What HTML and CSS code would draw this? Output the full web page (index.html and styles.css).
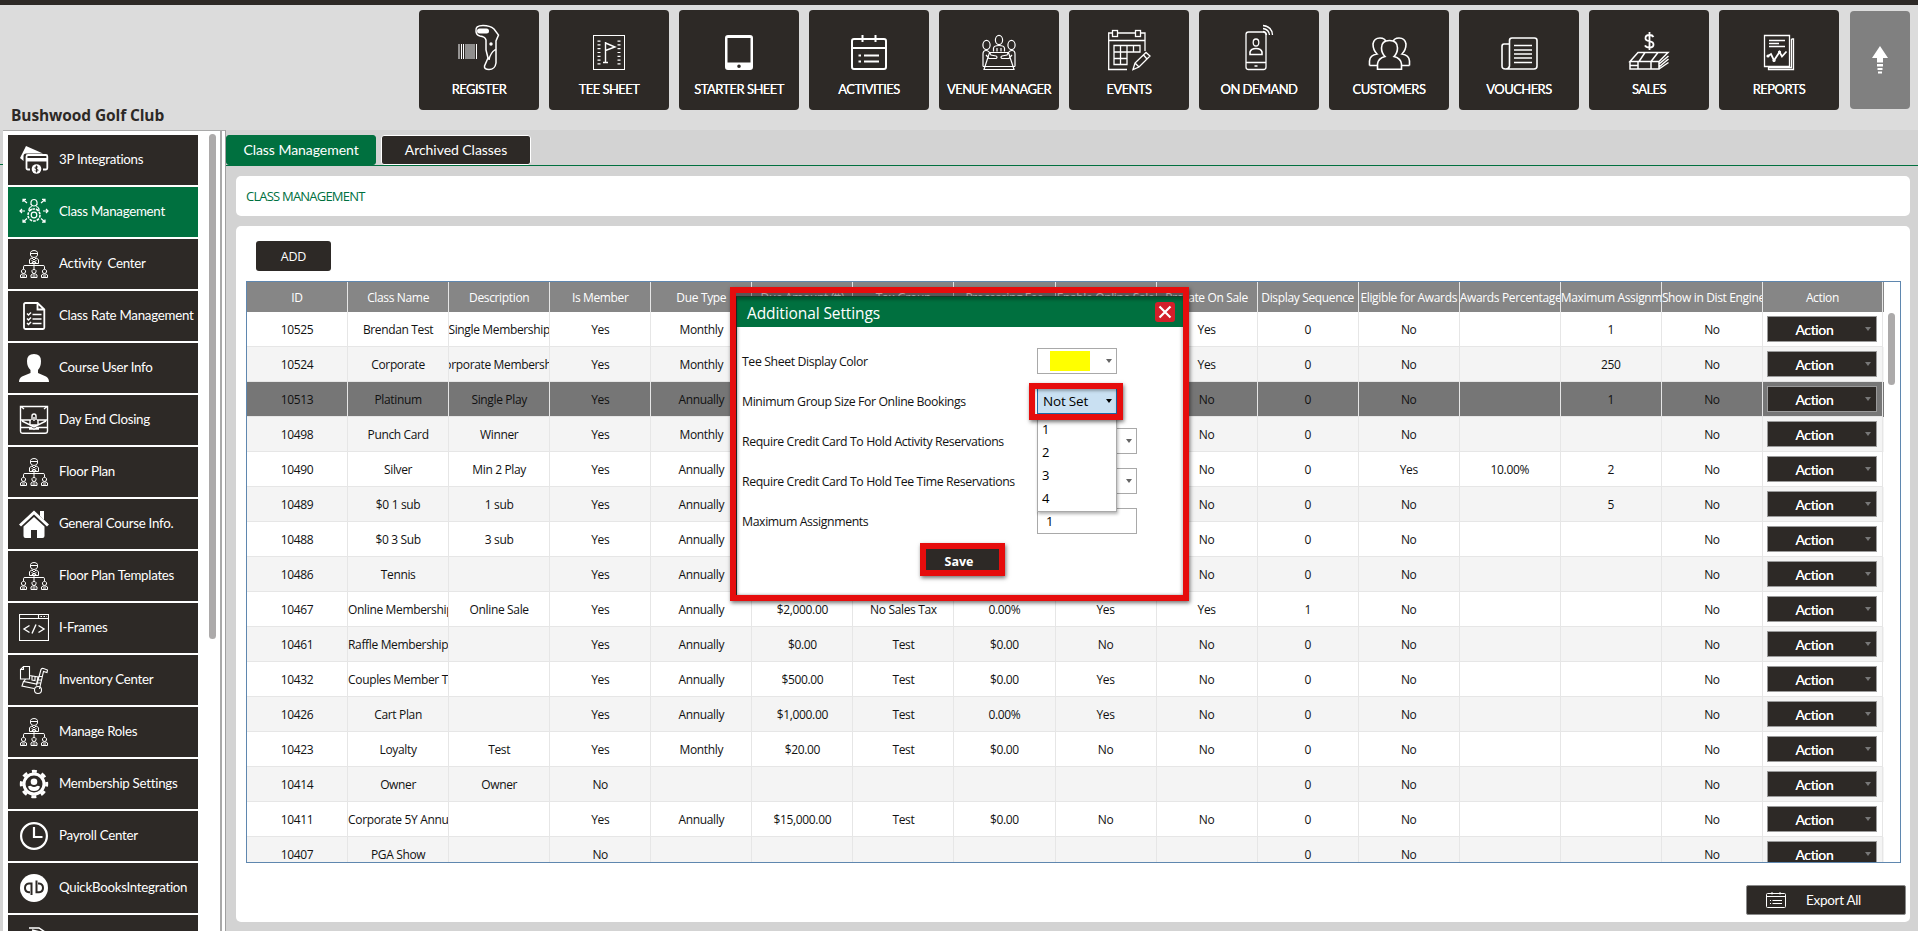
FILE: index.html
```
<!DOCTYPE html>
<html lang="en">
<head>
<meta charset="utf-8">
<title>Class Management</title>
<link rel="stylesheet" href="styles.css">
</head>
<body>
<svg class="defs" width="0" height="0">
  <symbol id="org" viewBox="0 0 30 30">
    <g fill="none" stroke="#fff" stroke-width="1">
      <path d="M11.5 6V3.5Q12 1.5 15 1.5T18.500 3.500V6Q18 8.500 15 8.500T11.500 6ZM11.500 4.500H18.500M10.500 14.500V11Q11 9.500 13 9L15 11L17 9Q19 9.500 19.500 11V14.500ZM12.500 11.500L17.500 14M17.500 11.500L12.500 14"/>
      <path d="M15 14.500V20M4.500 20V17.500Q4.500 16.500 6 16.500H24Q25.500 16.500 25.500 17.500V20"/>
      <g id="mini"><path d="M2.500 23V21.500Q3 20.500 4.500 20.500T6.500 21.500V23Q6 24.500 4.500 24.500T2.500 23ZM1.500 28.500V26L3 25H6L7.500 26V28.500ZM3 27H6"/></g>
      <use href="#mini" x="10.500"/><use href="#mini" x="21"/>
    </g>
  </symbol>
</svg>
<div class="topbar"></div>
<header class="header">
  <h1 class="club">Bushwood Golf Club</h1>
  <nav class="mainnav">
    <a class="tile"><svg viewBox="0 0 50 50"><g stroke="#fff"><path stroke-width="1" d="M5 22V37M7.500 22V37M9.500 22V37"/><path stroke-width="1.400" stroke="#bbb" d="M12 22V37M14 22V37M16 22V37M18 22V37M20 22V37"/><path d="M22.500 22V37"/><path fill="none" stroke-width="1.500" d="M22 9Q21 3.500 29 3.500Q36 3.500 40 7L44.500 13L42 19V41Q41 47.500 35 47.500Q30 47.500 30.500 44L34 36L32 28V18Q31 14.500 26 14Q22 13 22 9ZM42 27Q36 31 35 38"/></g><rect x="23" y="6.500" width="12" height="5" rx="2.500" fill="#fff"/><circle cx="37" cy="22" r="1.700" fill="#fff"/></svg><span>REGISTER</span></a>
    <a class="tile"><svg viewBox="0 0 50 50"><g fill="none" stroke="#fff"><rect x="9.500" y="13.500" width="31" height="34"/><path stroke-width="3" stroke-dasharray="1.200 2.600" d="M15 18.500V43M35 18.500V43"/><path stroke-width="1.400" d="M21.500 20V40.500M19 40.500H24M21.500 21L31 25L21.500 28.500"/></g></svg><span>TEE SHEET</span></a>
    <a class="tile"><svg viewBox="0 0 50 50"><path fill="#fff" fill-rule="evenodd" d="M14 13H36Q39 13 39 16V45Q39 48 36 48H14Q11 48 11 45V16Q11 13 14 13ZM13.500 16V40.500H36.500V16ZM25 42.500A1.800 1.800 0 1 0 25 46.100A1.800 1.800 0 1 0 25 42.500Z"/></svg><span>STARTER SHEET</span></a>
    <a class="tile"><svg viewBox="0 0 50 50"><g fill="none" stroke="#fff" stroke-width="2"><rect x="8" y="17" width="34" height="30" rx="2"/><path d="M8 26H42M18.500 13V20M31.500 13V20M14.500 33.500H17M20 33.500H35M14.500 39.500H17M20 39.500H35"/></g></svg><span>ACTIVITIES</span></a>
    <a class="tile"><svg viewBox="0 0 50 50"><g fill="none" stroke="#fff" stroke-width="1.200"><ellipse cx="25" cy="18" rx="3.600" ry="4.600"/><ellipse cx="12.500" cy="23" rx="3.600" ry="4.600"/><ellipse cx="37.500" cy="23" rx="3.600" ry="4.600"/><path d="M19.500 29.500V26Q20 23.500 25 23.500T30.500 26V29.500M23 26V29.500M27 26V29.500M10 47.500L15.500 30.500H34.500L40 47.500ZM9 44.500H41M9 44.500V32Q9 28.500 12 28.500Q15 28.500 17 33L22 34Q24 35 22 36.500H15L12 33M41 44.500V32Q41 28.500 38 28.500Q35 28.500 33 33L28 34Q26 35 28 36.500H35L38 33"/></g></svg><span>VENUE MANAGER</span></a>
    <a class="tile"><svg viewBox="0 0 50 50"><g fill="none" stroke="#fff" stroke-width="1.300"><path d="M23 47.500H4.700V11H8M14 11H31M37 11H41V29M4.700 18.500H41"/><rect x="8.500" y="8.500" width="5" height="6"/><rect x="31.500" y="8.500" width="5" height="6"/><path d="M10 23.500H36V30H10ZM10 30V42.500H23V23.500M16.500 23.500V42.500M10 36.500H23M29.500 23.500V30M29 47.500L31 41L42 30.500L46 34L35 45ZM31 41L35 45M39.500 33L43 37"/></g></svg><span>EVENTS</span></a>
    <a class="tile"><svg viewBox="0 0 50 50"><g fill="none" stroke="#fff" stroke-width="1.300"><rect x="12" y="10" width="20" height="37.500" rx="2.500"/><path d="M12 40.500H32M29 3.500Q38 4.500 38.500 13M29 6.500Q35 7.500 35.500 13M29 9.500Q32 10 32.500 13"/><ellipse cx="22" cy="20.500" rx="2.800" ry="3.500"/><path d="M16 32.500V30Q17 26.500 22 26.500T28 30V32.500ZM20.500 44H23.500" stroke-width="1.600"/></g></svg><span>ON DEMAND</span></a>
    <a class="tile"><svg viewBox="0 0 50 50"><g fill="none" stroke="#fff" stroke-width="1.600"><path fill="#2d2926" d="M5.500 43.500V39Q6 33 13 32Q9 28 9 22Q10 16 16 16Q21 16 22 20M45.500 43.500V39Q45 33 38 32Q42 28 42 22Q41 16 35 16Q30 16 29 20M5.500 43.500H13M38 43.500H45.500"/><path fill="#2d2926" d="M17.500 26Q17.500 18.500 25.500 18.500T33.500 26Q33.500 31 30 34.500Q37 36.500 37.500 42V47.300H13.500V42Q14 36.500 21 34.500Q17.500 31 17.500 26Z"/></g></svg><span>CUSTOMERS</span></a>
    <a class="tile"><svg viewBox="0 0 50 50"><g fill="none" stroke="#fff" stroke-width="1.600"><path d="M15.500 22H10Q8 22 8 24.500V44Q8 47 11.500 47H40Q43 47 43 44V18.500Q43 16 40.500 16H18Q15.500 16 15.500 18.500V44Q15 47 12 47"/><path d="M20 23.500H38M20 28H38M20 32H38M20 36H38M20 40.500H38"/></g></svg><span>VOUCHERS</span></a>
    <a class="tile"><svg viewBox="0 0 50 50"><g fill="none" stroke="#fff" stroke-width="1.500"><path stroke-width="1.800" d="M29.500 15Q28.500 13 25.500 13Q21.500 13 21.500 16.200Q21.500 18.500 25.500 19.200Q29.500 20 29.500 22.800Q29.500 25.500 25.500 25.500Q22 25.500 21 23.300M25.500 10V28"/><path d="M14 30.500H44L35 39.500H6ZM21 30.500L15 39.500M34 30.500L27 39.500M6 39.500V47H35V39.500M6 43.500H14M14 40V47M27 40V47M35 42L44.500 34M35 45L44.500 37M35 47L44.500 40.500"/></g></svg><span>SALES</span></a>
    <a class="tile"><svg viewBox="0 0 50 50"><g fill="none" stroke="#fff" stroke-width="1.300"><path d="M10.500 13.500H35.500V44.500H10.500ZM14.500 44.500V47.500H39.500V17H37.500M37.500 17V45.500H14.500"/><path d="M15 18.500H31M15 21.500H25M15 24.500H31"/><path stroke-width="1.800" d="M14 34L17 32L20 38.500L25.500 30L28 34.500L32.500 29.500"/></g><g fill="#fff"><circle cx="14" cy="34" r="1.600"/><circle cx="20" cy="38.500" r="1.600"/><circle cx="25.500" cy="30" r="1.600"/></g></svg><span>REPORTS</span></a>
    <a class="collapse"><svg viewBox="0 0 16 28"><path fill="#fff" d="M8 0L16 12H11V16.500H5V12H0Z"/><path fill="#fff" d="M5 18H11V20.500H5ZM5.500 22H10.500V24H5.500ZM6 25.500H10V27.500H6Z"/></svg></a>
  </nav>
</header>
<div class="body">
  <div class="edge"></div>
  <aside class="sidebar">
    <ul class="menu">
      <li><svg viewBox="0 0 30 30"><path fill="#fff" d="M7 1L24 8.500H7Q4.500 8.500 4.500 11V16L1 13Z"/><path fill="none" stroke="#fff" stroke-width="1.800" d="M11 24.500H9Q7.500 24.500 7.500 23V11.500Q7.500 10 9 10H27Q28.300 10 28.300 11.500V23Q28.300 24.500 27 24.500H24"/><path fill="#fff" d="M8 13H28V16.500H8Z"/><circle cx="17.500" cy="24" r="4.800" fill="#fff"/><path fill="none" stroke="#2d2926" stroke-width="1" d="M19 22.500Q18.500 21.700 17.500 21.700Q16 21.700 16 22.900Q16 24 17.500 24T19 25.200Q19 26.300 17.500 26.300Q16.400 26.300 16 25.500M17.500 20.500V27.500"/></svg><span>3P Integrations</span></li>
      <li class="on"><svg viewBox="0 0 30 30"><g fill="none" stroke="#fff" stroke-width="1.200"><path d="M12 8V5Q12.500 2.500 15 2.500T18 5V8M12 7Q12.500 9 15 9T18 7M10 14V12Q11 9.500 13 9.500M20 14V12Q19 9.500 17 9.500M10 14L13 12M20 14L17 12"/><circle cx="15" cy="18" r="2.800"/><circle cx="15" cy="18" r="6" stroke-width="1.600" stroke-dasharray="2.700 1"/><path d="M4 2.500L8 6M4 5V2.300H7M26 2.500L22 6M26 5V2.300H23M4 25L8 21.500M4 22.500V25.200H7M26 25L22 21.500M26 22.500V25.200H23M1 14H6M3 12L1 14L3 16M29 14H24M27 12L29 14L27 16"/></g></svg><span>Class Management</span></li>
      <li><svg><use href="#org"/></svg><span>Activity&nbsp; Center</span></li>
      <li><svg viewBox="0 0 30 30"><g fill="none" stroke="#fff" stroke-width="1.800"><path d="M18.500 2H6.500Q5 2 5 3.500V26.500Q5 28 6.500 28H24Q25.300 28 25.300 26.500V8.500ZM18.500 2V8.500H25.300"/><path stroke-width="1.500" d="M8 12.500L9.500 14L12 11.500M13.500 13.500H22.500M8 17.500L9.500 19L12 16.500M13.500 18H22.500M8 22L9.500 23.500L12 21M13.500 22.500H22.500"/></g></svg><span>Class Rate Management</span></li>
      <li><svg viewBox="0 0 30 30"><path fill="#fff" d="M15 1Q22 1 22 8Q22 14 19 17V20L27 23.500Q30 25 30 29H0Q0 25 3 23.500L11.500 20V17Q8 14 8 8Q8 1 15 1Z"/></svg><span>Course User Info</span></li>
      <li><svg viewBox="0 0 30 30"><g fill="none" stroke="#fff" stroke-width="1.400"><path d="M1.500 1.500H28.500V26Q28.500 28.300 26 28.300H4Q1.500 28.300 1.500 26Z"/><path d="M2 15H12M18 15H28M3 16L15 22L27 16M2 22.500H12L15 24.500L18 22.500H28M10 24H20M11 15V20H19V15M13 15V11Q13 9 15 9T17 11V15M15 12V16M2 1.500L5 4M28 1.500L25 4"/></g></svg><span>Day End Closing</span></li>
      <li><svg><use href="#org"/></svg><span>Floor Plan</span></li>
      <li><svg viewBox="0 0 30 30"><path fill="none" stroke="#fff" stroke-width="3" d="M1 16.500L15 3.500L29 16.500"/><path fill="#fff" d="M21 2H25V11L21 7ZM15 8L25.500 17.500V27Q25.500 29 23.500 29H18V21H12V29H6.500Q4.500 29 4.500 27V17.500Z"/></svg><span>General Course Info.</span></li>
      <li><svg><use href="#org"/></svg><span>Floor Plan Templates</span></li>
      <li><svg viewBox="0 0 30 30"><g fill="none" stroke="#fff" stroke-width="1.100"><path d="M.5 1.500H29.500V27.500H.5ZM.5 5.500H29.500M19.500 1.500V5.500"/><path stroke-width="1.400" d="M10.500 12.500L5 16L10.500 19.500M19.500 12.500L25 16L19.500 19.500M17 11.500L13 20.500"/><path stroke-dasharray="1.500 1.500" d="M21.500 3.500H28"/></g></svg><span>I-Frames</span></li>
      <li><svg viewBox="0 0 30 30"><g fill="none" stroke="#fff" stroke-width="1.100"><path d="M4.500 1.500H10.500V14H1.500V4.500ZM1.500 4.500H4.500V1.500M10.500 10.500L19 12L17.500 19L4.500 16.500L3 21L15 23.500M13 11.500V15L16 15.500V12M5 16.500L6.500 14M22 4.500Q22.500 3 24.500 3.500L28.500 5L28 7.500L24.500 6.500L20.500 24M22 4.500L17.500 20.500M20 11.500H23.500M19.500 15H22.500M18.500 18H22"/><circle cx="19" cy="25" r="3.500"/></g></svg><span>Inventory Center</span></li>
      <li><svg><use href="#org"/></svg><span>Manage Roles</span></li>
      <li><svg viewBox="0 0 30 30"><circle cx="15" cy="15" r="10" fill="none" stroke="#fff" stroke-width="3"/><circle cx="15" cy="15" r="12.700" fill="none" stroke="#fff" stroke-width="3" stroke-dasharray="5 4.975" stroke-dashoffset="2.500"/><circle cx="15" cy="12.800" r="3.300" fill="#fff"/><path fill="#fff" d="M9 17.500Q11 16.500 12 17Q15 19 18 17Q19 16.500 21 17.500Q20 22 15 22T9 17.500Z"/></svg><span>Membership Settings</span></li>
      <li><svg viewBox="0 0 30 30"><g fill="none" stroke="#fff" stroke-width="2.200"><circle cx="15" cy="15" r="12.900"/><path d="M15 6V16H23.500"/></g></svg><span>Payroll Center</span></li>
      <li><svg viewBox="0 0 30 30"><circle cx="15" cy="15" r="14" fill="#fff"/><g fill="none" stroke="#2d2926" stroke-width="2"><path d="M12.500 22V10.500H10Q6 11 6 15T10 19.300H11M17.500 7.500V19.300H20Q24 19 24 15T20 10.500H19"/></g></svg><span>QuickBooksIntegration</span></li>
      <li><svg viewBox="0 0 30 30"><path fill="none" stroke="#fff" stroke-width="1.500" d="M10 3H20L26 7M13 5L21 7L25 11M14 8H19V14"/></svg><span></span></li>
    </ul>
    <div class="thumb"></div>
  </aside>
  <main class="main">
    <div class="tabs"><div class="tab active">Class Management</div><div class="tab">Archived Classes</div></div>
    <section class="card crumb">CLASS MANAGEMENT</section>
    <section class="card panel">
      <button class="add">ADD</button>
      <div class="grid">
        <div class="rows">
          <div class="row head"><b>ID</b><b>Class Name</b><b>Description</b><b>Is Member</b><b>Due Type</b><b>Due Amount (₶)</b><b>Tax Group</b><b>Processing Fee</b><b>Enable Online Sale</b><b>Prorate On Sale</b><b>Display Sequence</b><b>Eligible for Awards</b><b>Awards Percentage</b><b>Maximum Assignments</b><b>Show in Dist Engine</b><b>Action</b></div>
          <div class="row"><i>10525</i><i>Brendan Test</i><i>Single Membership</i><i>Yes</i><i>Monthly</i><i></i><i></i><i></i><i></i><i>Yes</i><i>0</i><i>No</i><i></i><i>1</i><i>No</i><i><u>Action</u></i></div>
          <div class="row"><i>10524</i><i>Corporate</i><i>Corporate Membership</i><i>Yes</i><i>Monthly</i><i></i><i></i><i></i><i></i><i>Yes</i><i>0</i><i>No</i><i></i><i>250</i><i>No</i><i><u>Action</u></i></div>
          <div class="row sel"><i>10513</i><i>Platinum</i><i>Single Play</i><i>Yes</i><i>Annually</i><i></i><i></i><i></i><i></i><i>No</i><i>0</i><i>No</i><i></i><i>1</i><i>No</i><i><u>Action</u></i></div>
          <div class="row"><i>10498</i><i>Punch Card</i><i>Winner</i><i>Yes</i><i>Monthly</i><i></i><i></i><i></i><i></i><i>No</i><i>0</i><i>No</i><i></i><i></i><i>No</i><i><u>Action</u></i></div>
          <div class="row"><i>10490</i><i>Silver</i><i>Min 2 Play</i><i>Yes</i><i>Annually</i><i></i><i></i><i></i><i></i><i>No</i><i>0</i><i>Yes</i><i>10.00%</i><i>2</i><i>No</i><i><u>Action</u></i></div>
          <div class="row"><i>10489</i><i>$0 1 sub</i><i>1 sub</i><i>Yes</i><i>Annually</i><i></i><i></i><i></i><i></i><i>No</i><i>0</i><i>No</i><i></i><i>5</i><i>No</i><i><u>Action</u></i></div>
          <div class="row"><i>10488</i><i>$0 3 Sub</i><i>3 sub</i><i>Yes</i><i>Annually</i><i></i><i></i><i></i><i></i><i>No</i><i>0</i><i>No</i><i></i><i></i><i>No</i><i><u>Action</u></i></div>
          <div class="row"><i>10486</i><i>Tennis</i><i></i><i>Yes</i><i>Annually</i><i></i><i></i><i></i><i></i><i>No</i><i>0</i><i>No</i><i></i><i></i><i>No</i><i><u>Action</u></i></div>
          <div class="row"><i>10467</i><i>Online Membership</i><i>Online Sale</i><i>Yes</i><i>Annually</i><i>$2,000.00</i><i>No Sales Tax</i><i>0.00%</i><i>Yes</i><i>Yes</i><i>1</i><i>No</i><i></i><i></i><i>No</i><i><u>Action</u></i></div>
          <div class="row"><i>10461</i><i>Raffle Membership</i><i></i><i>Yes</i><i>Annually</i><i>$0.00</i><i>Test</i><i>$0.00</i><i>No</i><i>No</i><i>0</i><i>No</i><i></i><i></i><i>No</i><i><u>Action</u></i></div>
          <div class="row"><i>10432</i><i>Couples Member Test</i><i></i><i>Yes</i><i>Annually</i><i>$500.00</i><i>Test</i><i>$0.00</i><i>Yes</i><i>No</i><i>0</i><i>No</i><i></i><i></i><i>No</i><i><u>Action</u></i></div>
          <div class="row"><i>10426</i><i>Cart Plan</i><i></i><i>Yes</i><i>Annually</i><i>$1,000.00</i><i>Test</i><i>0.00%</i><i>Yes</i><i>No</i><i>0</i><i>No</i><i></i><i></i><i>No</i><i><u>Action</u></i></div>
          <div class="row"><i>10423</i><i>Loyalty</i><i>Test</i><i>Yes</i><i>Monthly</i><i>$20.00</i><i>Test</i><i>$0.00</i><i>No</i><i>No</i><i>0</i><i>No</i><i></i><i></i><i>No</i><i><u>Action</u></i></div>
          <div class="row"><i>10414</i><i>Owner</i><i>Owner</i><i>No</i><i></i><i></i><i></i><i></i><i></i><i></i><i>0</i><i>No</i><i></i><i></i><i>No</i><i><u>Action</u></i></div>
          <div class="row"><i>10411</i><i>Corporate 5Y Annual</i><i></i><i>Yes</i><i>Annually</i><i>$15,000.00</i><i>Test</i><i>$0.00</i><i>No</i><i>No</i><i>0</i><i>No</i><i></i><i></i><i>No</i><i><u>Action</u></i></div>
          <div class="row"><i>10407</i><i>PGA Show</i><i></i><i>No</i><i></i><i></i><i></i><i></i><i></i><i></i><i>0</i><i>No</i><i></i><i></i><i>No</i><i><u>Action</u></i></div>
        </div>
        <div class="gridthumb"></div>
      </div>
      <button class="export"><svg viewBox="0 0 20 16"><g fill="none" stroke="#fff"><rect x=".5" y="1.500" width="19" height="14" rx="1"/><path d="M.5 4.500H19.500M6 0V2.500M14 0V2.500M4 8.500H5M6.500 8.500H16M4 11.500H5M6.500 11.500H16"/></g></svg><span>Export All</span></button>
    </section>
  </main>
</div>
<div class="frame">
  <div class="dialog">
    <div class="title"><span>Additional Settings</span><button class="close"><svg viewBox="0 0 20 20"><path fill="none" stroke="#fff" stroke-width="2.200" d="M4.500 4.500L15.500 15.500M15.500 4.500L4.500 15.500"/></svg></button></div>
    <div class="form">
      <div class="field"><label>Tee Sheet Display Color</label><div class="combo short"><div class="swatch"></div></div></div>
      <div class="field"><label>Minimum Group Size For Online Bookings</label><div class="combo short open">Not Set
        <div class="list"><div>1</div><div>2</div><div>3</div><div>4</div></div>
        <div class="mark"></div></div></div>
      <div class="field"><label>Require Credit Card To Hold Activity Reservations</label><div class="combo"></div></div>
      <div class="field"><label>Require Credit Card To Hold Tee Time Reservations</label><div class="combo"></div></div>
      <div class="field"><label>Maximum Assignments</label><div class="input">1</div></div>
    </div>
    <button class="save">Save</button>
  </div>
</div>
</body>
</html>
```
FILE: styles.css
```
* { box-sizing: border-box; }
body { margin: 0; width: 1918px; height: 931px; overflow: hidden; position: relative; background: #d3d3d3; font: 12px "Open Sans", "Noto Sans", sans-serif; display: flex; flex-direction: column; }
button { border: 0; padding: 0; font: inherit; color: #fff; }
.defs { position: absolute; }
.topbar { height: 5px; background: #2d2926; flex: none; }
.header { height: 125px; flex: none; background: #dcdcdc; display: flex; justify-content: space-between; }
.club { margin: 0; padding-left: 11px; align-self: flex-end; font: bold 15.500px/32px "Open Sans", sans-serif; letter-spacing: -.1px; color: #2d2926; height: 31px; }
.mainnav { display: flex; gap: 10px; padding: 5px 8px 0 0; }
.tile { width: 120px; height: 100px; border-radius: 4px; background: #2d2926; color: #fff; display: flex; flex-direction: column; align-items: center; padding-top: 12px; font: 13px/18px Lato, sans-serif; letter-spacing: -.55px; white-space: nowrap; text-shadow: 0 0 .4px #fff; }
.tile svg { width: 50px; height: 50px; margin-bottom: 8px; }
.collapse { width: 60px; height: 98px; margin: 1px 0 0 1px; border-radius: 4px; background: #808080; display: flex; justify-content: center; align-items: center; }
.collapse svg { width: 16px; height: 28px; }
.body { display: flex; flex: 1; min-height: 0; }
.edge { width: 3px; border-bottom: 1px solid #00703f; height: 35px; }
.sidebar { width: 223px; background: #fff; border-top: 1px solid #a9a9a9; border-right: 1px solid #a0a0a0; padding: 4px 0 0 5px; display: flex; overflow: hidden; background-image: linear-gradient(#a9a9a9, #a9a9a9); background-size: 2px 100%; background-position: 217px 0; background-repeat: no-repeat; }
.menu { list-style: none; margin: 0; padding: 0; width: 190px; display: flex; flex-direction: column; gap: 2px; }
.menu li { flex: none; width: 190px; height: 50px; background: #2d2926; color: #fff; display: flex; align-items: center; padding-left: 11px; gap: 10px; font: 13.300px Lato, sans-serif; letter-spacing: -.27px; font-variant-ligatures: common-ligatures; white-space: nowrap; }
.menu li span { padding-bottom: 2px; }
.menu li.on { background: #00703f; }
.menu svg { width: 30px; height: 30px; flex: none; }
.thumb { width: 7px; height: 505px; border-radius: 4px; background: #acaaaa; margin: -1px 0 0 11px; }
.main { flex: 1; min-width: 0; }
.tabs { height: 36px; border-bottom: 1px solid #00703f; padding-top: 5px; display: flex; gap: 5px; }
.tab { width: 150px; height: 30px; border: 1px solid #fff; border-radius: 3px; background: #2d2926; color: #fff; font: 14px/28px Lato, sans-serif; letter-spacing: -.05px; text-align: center; }
.tab.active { background: #00703f; border-color: #00703f; }
.card { background: #fff; border-radius: 5px; margin-left: 10px; width: 1674px; }
.crumb { margin-top: 10px; height: 40px; padding-left: 10px; font: 13px/41px "Open Sans", sans-serif; letter-spacing: -.8px; color: #00703f; }
.panel { margin-top: 10px; height: 696px; padding: 15px 4px 0 10px; display: flex; flex-direction: column; }
.add { width: 75px; height: 30px; margin-left: 10px; border-radius: 3px; background: #2d2926; font-size: 12.500px; letter-spacing: -.2px; flex: none; }
.grid { margin-top: 10px; width: 1655px; height: 582px; flex: none; border: 1px solid #5f87af; overflow: hidden; display: flex; }
.rows { width: 1637px; }
.row { display: grid; grid-template-columns: repeat(15, 101.070px) 120px; height: 35px; background: #fff; }
.row:nth-child(odd) { background: #f4f4f4; }
.row i, .row b { font-style: normal; font-weight: 400; display: flex; align-items: center; justify-content: safe center; overflow: hidden; white-space: nowrap; letter-spacing: -.35px; border-right: 1px solid #e6e6e6; border-bottom: 1px solid #e6e6e6; padding-top: 1px; color: #111; }
.row > :nth-child(3) { justify-content: center; }
.row.head { height: 30px; background: #868686; }
.row b { color: #fff; border-bottom: 0; padding-top: 0; }
.row.sel { background: #767676; }
.row u { width: 110px; height: 26px; border: 1px solid #9b9b9b; background: #2d2926; color: #fff; text-decoration: none; display: flex; align-items: center; justify-content: center; padding-right: 16px; font: 14px Lato, sans-serif; text-shadow: 0 0 .6px #fff; position: relative; }
.row u::after { content: ""; position: absolute; right: 5px; top: 10px; border: 3px solid transparent; border-top: 4px solid #777; border-bottom: 0; }
.row i:last-child { padding-top: 0; }
.gridthumb { width: 7px; height: 72px; margin: 31px 0 0 4px; border-radius: 4px; background: #acaaaa; }
.export { margin: 22px 0 0 auto; width: 160px; height: 30px; border-radius: 2px; border: 1px solid #8a8a8a; background: #2d2926; display: flex; align-items: center; padding: 0 0 1px 19px; gap: 20px; font: 13.500px Lato, sans-serif; letter-spacing: -.3px; }
.export svg { width: 20px; height: 16px; }
.frame { position: absolute; left: 730px; top: 287px; width: 459px; height: 314px; border: 6px solid #e60d0d; box-shadow: 1px 2px 4px rgba(0,0,0,.55); background: linear-gradient(rgba(0,0,0,.35) 3px, #fff 3px); background-clip: padding-box; background-origin: padding-box; padding-top: 3px; }
.dialog { height: 299px; background: #fff; border-left: 1px solid #222; border-top: 1px solid #173b2a; box-shadow: inset 1px 0 3px rgba(0,0,0,.3), inset -2px 0 3px rgba(0,0,0,.15); display: flex; flex-direction: column; align-items: flex-start; }
.title { align-self: stretch; height: 30px; background: #00703f; color: #fff; display: flex; justify-content: space-between; align-items: center; padding: 0 8px 0 10px; font-size: 15.500px; letter-spacing: -.1px; box-shadow: inset 0 3px 3px rgba(0,0,0,.25); }
.title span { padding-top: 2px; }
.close { width: 20px; height: 20px; border-radius: 3px; background: #d31f2a; }
.close svg { display: block; }
.form { padding: 14px 0 0 5px; }
.field { height: 40px; display: flex; align-items: center; }
.field label { width: 295px; font-size: 12.300px; letter-spacing: -.4px; color: #111; white-space: nowrap; }
.combo, .input { width: 100px; height: 26px; border: 1px solid #a9a9a9; background: #fff; position: relative; }
.short { width: 80px; }
.combo::after { content: ""; position: absolute; right: 4px; top: 10px; border: 3px solid transparent; border-top: 4px solid #666; border-bottom: 0; }
.swatch { width: 40px; height: 20px; margin: 2px 0 0 12px; background: #ff0; }
.open { background: #c9e0f2; border-color: #1c6fb0; font-size: 13.500px; line-height: 24px; letter-spacing: -.2px; padding-left: 5px; }
.open::after { border-top-color: #000; }
.list { position: absolute; left: -1px; top: 25px; width: 80px; height: 98px; border: 1px solid #a9a9a9; background: #fff; box-shadow: 1px 2px 3px rgba(0,0,0,.3); padding: 4px 0 0 4px; z-index: 2; font-size: 13px; }
.list div { height: 23px; line-height: 21px; }
.mark { position: absolute; z-index: 3; left: -9px; top: -6px; width: 94px; height: 37px; border: 6px solid #e60d0d; box-shadow: 1px 2px 4px rgba(0,0,0,.55), inset 0 2px 3px rgba(0,0,0,.3); }
.input { padding-left: 8px; font-size: 13px; line-height: 24px; }
.save { width: 85px; height: 33px; margin: 2px 0 0 183px; border: 6px solid #e60d0d; background: #2d2926; font: bold 12.500px/19px "Open Sans", sans-serif; padding: 3px 7px 0 0; box-shadow: 1px 2px 4px rgba(0,0,0,.55); }
```
